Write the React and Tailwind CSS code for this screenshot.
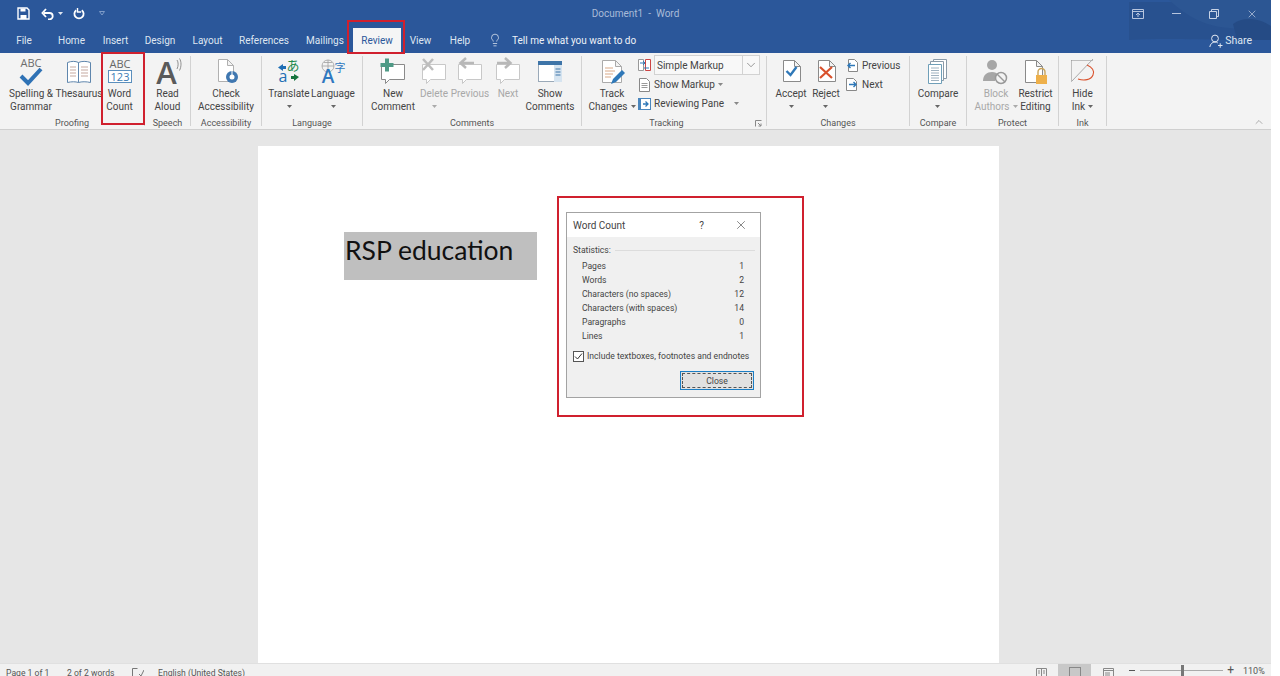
import { Lightbulb, X, ChevronDown, ChevronUp } from 'lucide-react';

const tabs = [
  ['File', 'w-[48px]'],
  ['Home', 'w-[47px]'],
  ['Insert', 'w-[41px]'],
  ['Design', 'w-[48px]'],
  ['Layout', 'w-[47px]'],
  ['References', 'w-[66px]'],
  ['Mailings', 'w-[56px]'],
];

const stats = [
  ['Pages', 1],
  ['Words', 2],
  ['Characters (no spaces)', 12],
  ['Characters (with spaces)', 14],
  ['Paragraphs', 0],
  ['Lines', 1],
];

function Ico({ children, w = 32, h = 32 }) {
  return (
    <svg width={w} height={h} viewBox={`0 0 ${w} ${h}`} fill="none" className="block shrink-0 overflow-visible">
      {children}
    </svg>
  );
}

function Caret({ color = '#666' }) {
  return (
    <svg width="5" height="3" viewBox="0 0 5 3" className="shrink-0">
      <path d="M0 0h5L2.5 3z" fill={color} />
    </svg>
  );
}

function Doc({ x = 8, y = 4, w = 17, h = 22, stroke = '#9a9a9a' }) {
  return (
    <path
      d={`M${x + 0.5} ${y + 0.5}h${w - 6}l6 6v${h - 6}h-${w}z M${x + w - 6 + 0.5} ${y + 0.5}v6h6`}
      fill="#fff"
      stroke={stroke}
    />
  );
}

function Bubble({ stroke = '#8f8f8f', x = 4 }) {
  return (
    <path
      d={`M${x + 0.5} 8.5h23v15h-15l-4 4v-4h-4z`}
      fill="#fff"
      stroke={stroke}
    />
  );
}

function LargeButton({ icon, lines, width, caret, inlineCaret, disabled, children }) {
  return (
    <div className={`relative flex flex-col items-center shrink-0 ${width}`}>
      <div className="h-[31px] flex justify-center w-full">{icon}</div>
      <div className={`flex flex-col items-center leading-[13px] whitespace-nowrap ${disabled ? 'text-[#a8a8a8]' : 'text-[#444]'}`}>
        {lines.map((l, i) => (
          <div key={l} className="h-[13px] flex items-center gap-[3px]">
            {l}
            {inlineCaret && i === lines.length - 1 && <Caret color={disabled ? '#aaa' : '#666'} />}
          </div>
        ))}
        {caret && (
          <div className="h-[13px] flex items-center">
            <Caret color={disabled ? '#aaa' : '#666'} />
          </div>
        )}
      </div>
      {children}
    </div>
  );
}

function Group({ width, label, pad = '', launcher, children }) {
  return (
    <div className={`flex flex-col h-[70px] mt-[3px] border-r border-[#d2d2d2] shrink-0 ${width}`}>
      <div className={`flex h-[60px] ${pad}`}>{children}</div>
      <div className="flex h-[10px] pt-px leading-[12px] text-[9px] text-[#555]">
        <div className="flex-1 text-center whitespace-nowrap">{label}</div>
        {launcher && (
          <div className="w-[15px] pt-[3px] pl-[4px]">
            <svg width="7" height="7" viewBox="0 0 7 7" fill="none">
              <path d="M.5 6.500V.5h6M3 3l3 3M6 3.500V6H3.500" stroke="#888" />
            </svg>
          </div>
        )}
      </div>
    </div>
  );
}

function SmallRow({ icon, text, caret, gap = 'gap-[3px]', className = '' }) {
  return (
    <div className={`flex items-center ${gap} h-[19px] text-[10px] text-[#444] whitespace-nowrap ${className}`}>
      {icon}
      {text}
      {caret}
    </div>
  );
}

function Header() {
  return (
    <div className="relative bg-[#2b579a] h-[53px] shrink-0 overflow-hidden text-[10px] text-[#dfe6f1]">
      <svg width="142" height="53" viewBox="0 0 142 53" className="absolute right-0 top-0">
        <path d="M0 2h142v38H100C70 40 40 38 0 40z" fill="#28518f" />
        <path d="M40 0c20 18 36 26 60 28 18 1 30 8 42 4V0z" fill="#2c5693" />
        <path d="M104 24c10-8 26-6 38 2v14h-34z" fill="#254b85" />
      </svg>
      <div className="relative flex items-center h-[27px]">
        <div className="flex-1 flex items-center">
          <svg width="13" height="13" viewBox="0 0 13 13" fill="none" className="ml-[17px]">
            <path d="M1 1h9l2 2v9H1z" stroke="#fff" strokeWidth="1.400" />
            <path d="M3.500 1.500h5v3h-5zM3.500 8h6v4h-6z" fill="#fff" />
          </svg>
          <svg width="13" height="12" viewBox="0 0 13 12" fill="none" className="ml-[11px]">
            <path d="M3 5h5.500a3.200 3.200 0 0 1 0 6.400H7" stroke="#fff" strokeWidth="1.800" />
            <path d="M5 1 1.400 5 5 9" stroke="#fff" strokeWidth="1.800" />
          </svg>
          <div className="ml-[4px]">
            <Caret color="#dfe6f1" />
          </div>
          <svg width="12" height="12" viewBox="0 0 12 12" fill="none" className="ml-[10px]">
            <path d="M3.200 2.200a4.600 4.600 0 1 0 5.600 0" stroke="#fff" strokeWidth="1.800" />
            <path d="M7.500.3v4h3.600" stroke="#fff" strokeWidth="1.400" transform="translate(-3 -.3)" />
          </svg>
          <svg width="6" height="5" viewBox="0 0 6 5" fill="none" className="ml-[14px]">
            <path d="M.5.5h5L3 4z" stroke="#7f9cc8" />
          </svg>
        </div>
        <div className="text-[#a9bbd8] whitespace-nowrap text-[10px]">Document1&nbsp; -&nbsp; Word</div>
        <div className="flex-1 flex items-center justify-end text-[#c0cde2]">
          <svg width="12" height="10" viewBox="0 0 12 10" fill="none">
            <path d="M.5.5h11v9H.5zM.5 2.500h11M6 8V4M4 6l2-2 2 2" stroke="#b7c5de" />
          </svg>
          <div className="w-[9px] h-px bg-[#b7c5de] ml-[28px]" />
          <svg width="10" height="10" viewBox="0 0 10 10" fill="none" className="ml-[28px]">
            <path d="M.5 2.500h7v7h-7zM2.500 2.500v-2h7v7h-2" stroke="#c7d2e5" />
          </svg>
          <X size={12} strokeWidth={1.2} color="#dbe3f0" className="ml-[27px] mr-[13px]" />
        </div>
      </div>
      <div className="relative flex items-center h-[26px]">
        {tabs.map(([t, w]) => (
          <div key={t} className={`${w} text-center pt-px`}>{t}</div>
        ))}
        <div className="relative w-[48px] h-[25px] mt-px bg-[#f5f5f5] text-[#2b579a] flex items-center justify-center">
          Review
        </div>
        <div className="w-[39px] text-center pt-px">View</div>
        <div className="w-[40px] text-center pt-px">Help</div>
        <Lightbulb size={14} strokeWidth={1.1} color="#fff" className="ml-[8px]" />
        <div className="ml-[10px] pt-px whitespace-nowrap text-[#eef2f8]">Tell me what you want to do</div>
        <div className="ml-auto flex items-center pr-[19px] gap-[2px] pt-[2px]">
          <svg width="14" height="14" viewBox="0 0 14 14" fill="none">
            <circle cx="6" cy="4.500" r="3.400" stroke="#e3e9f3" />
            <path d="M.8 13c.5-3 2.500-5 5.200-5 1.200 0 2 .3 2.800 1M9 11.500h4.500M11.200 9.300v4.500" stroke="#e3e9f3" />
          </svg>
          <span className="text-[10.5px]">Share</span>
        </div>
      </div>
    </div>
  );
}

function Ribbon() {
  return (
    <div className="flex h-[77px] shrink-0 bg-[#f3f3f3] border-b border-[#cfcfcf] text-[10px]">
      <Group width="w-[145px]" label="Proofing" pad="pl-[4px]">
        <LargeButton
          width="w-[54px]"
          lines={['Spelling &', 'Grammar']}
          icon={
            <Ico>
              <text x="16" y="11" textAnchor="middle" fontSize="11" fill="#6d6d6d" fontFamily="Open Sans">ABC</text>
              <path d="M6 20l7 7L26 13" stroke="#2f72b5" strokeWidth="4" />
            </Ico>
          }
        />
        <LargeButton
          width="w-[42px]"
          lines={['Thesaurus']}
          icon={
            <Ico>
              <path d="M4.500 6.500c4-1.500 8-1.500 11 0 3-1.500 8-1.500 12 0v20c-4-1-9-1-12 0-3-1-7-1-11 0z" fill="#fff" stroke="#5f86ad" />
              <path d="M15.500 6.500v20" stroke="#5f86ad" />
              <path d="M7 11h6M7 14h6M7 17h6M7 20h6M18 11h7M18 14h7M18 17h7M18 20h7" stroke="#c5a9a0" />
            </Ico>
          }
        />
        <LargeButton
          width="w-[39px]"
          lines={['Word', 'Count']}
          icon={
            <Ico>
              <text x="16" y="12" textAnchor="middle" fontSize="11" fill="#666" fontFamily="Open Sans">ABC</text>
              <rect x="4.500" y="14.500" width="23" height="12" fill="#fff" stroke="#5b8fbd" />
              <text x="16" y="24.500" textAnchor="middle" fontSize="11" fill="#3c7cb4" fontFamily="Open Sans">123</text>
            </Ico>
          }
        >
          <div className="absolute left-[1px] top-[-4px] w-[44px] h-[73px] border-2 border-[#d0202e] pointer-events-none" />
        </LargeButton>
      </Group>

      <Group width="w-[46px]" label="Speech">
        <LargeButton
          width="w-[45px]"
          lines={['Read', 'Aloud']}
          icon={
            <Ico>
              <text x="14.500" y="27.500" textAnchor="middle" fontSize="31" fontWeight="600" fill="#5a5a5a" fontFamily="Open Sans">A</text>
              <path d="M25 4c1.500 2 1.500 6 0 9M27.500 2.500c2 3 2 8 0 12" stroke="#777" strokeWidth=".8" />
            </Ico>
          }
        />
      </Group>

      <Group width="w-[71px]" label="Accessibility">
        <LargeButton
          width="w-[70px]"
          lines={['Check', 'Accessibility']}
          icon={
            <Ico>
              <Doc x={8} y={3} w={15} h={22} stroke="#b0b0b0" />
              <circle cx="22" cy="21" r="6" fill="#3f77b0" />
              <circle cx="22" cy="21" r="2.500" fill="#fff" />
              <path d="M22 21V15" stroke="#fff" />
            </Ico>
          }
        />
      </Group>

      <Group width="w-[101px]" label="Language" pad="pl-[5px]">
        <LargeButton
          width="w-[44px]"
          lines={['Translate']}
          caret
          icon={
            <Ico>
              <path d="M5 11.500l5-3.500v2h3v3h-3v2z" fill="#1f6fb5" />
              <text x="20" y="14" textAnchor="middle" fontSize="13" fill="#1f8a4d" fontFamily="Noto Sans CJK JP">あ</text>
              <text x="10" y="26" textAnchor="middle" fontSize="16" fill="#1f6fb5" fontFamily="Open Sans">a</text>
              <path d="M26 21l-5 4v-2h-3v-3h3v-2z" fill="#15743e" />
            </Ico>
          }
        />
        <LargeButton
          width="w-[44px]"
          lines={['Language']}
          caret
          icon={
            <Ico>
              <circle cx="11" cy="10" r="6" stroke="#a0a0a0" strokeWidth=".8" />
              <path d="M5 10h12M11 4v12M7 6.500h8" stroke="#a0a0a0" strokeWidth=".8" />
              <text x="11" y="27" textAnchor="middle" fontSize="19" fontWeight="600" fill="#2f78c0" fontFamily="Open Sans">A</text>
              <text x="23" y="16" textAnchor="middle" fontSize="11" fill="#2f78c0" fontFamily="Noto Sans CJK SC">字</text>
            </Ico>
          }
        />
      </Group>

      <Group width="w-[219px]" label="Comments" pad="pl-[7px]">
        <LargeButton
          width="w-[46px]"
          lines={['New', 'Comment']}
          icon={
            <Ico>
              <Bubble stroke="#8a8a8a" />
              <path d="M10 2.500v13M3.500 9h13" stroke="#4f9a86" strokeWidth="4" />
            </Ico>
          }
        />
        <LargeButton
          width="w-[36px]"
          disabled
          lines={['Delete']}
          caret
          icon={
            <Ico>
              <Bubble stroke="#c8c8c8" />
              <path d="M5 3l10 11M15 3L5 14" stroke="#bdbdbd" strokeWidth="2.500" />
            </Ico>
          }
        />
        <LargeButton
          width="w-[36px]"
          disabled
          lines={['Previous']}
          icon={
            <Ico>
              <Bubble stroke="#c8c8c8" />
              <path d="M20 7H7M12 2L6.500 7l5.500 5" stroke="#b8b8b8" strokeWidth="2.500" />
            </Ico>
          }
        />
        <LargeButton
          width="w-[40px]"
          disabled
          lines={['Next']}
          icon={
            <Ico>
              <Bubble stroke="#c8c8c8" />
              <path d="M5 7h13M13 2l5.500 5-5.500 5" stroke="#b8b8b8" strokeWidth="2.500" />
            </Ico>
          }
        />
        <LargeButton
          width="w-[44px]"
          lines={['Show', 'Comments']}
          icon={
            <Ico>
              <rect x="4.500" y="5.500" width="23" height="20" fill="#fff" stroke="#9aa9b8" />
              <rect x="4" y="5" width="24" height="4" fill="#3d74a8" />
              <rect x="20" y="9" width="8" height="17" fill="#d6e4f0" />
              <path d="M21.500 13h5M21.500 16h5M21.500 19h5" stroke="#3d74a8" />
            </Ico>
          }
        />
      </Group>

      <Group width="w-[185px]" label="Tracking" pad="pl-[8px]" launcher>
        <LargeButton
          width="w-[44px]"
          lines={['Track', 'Changes']}
          inlineCaret
          icon={
            <Ico>
              <Doc x={6} y={4} w={19} h={22} stroke="#aaa" />
              <path d="M9 12h8M9 15h10M9 18h8M9 21h6" stroke="#d8a887" />
              <path d="M15 28l2-5L26 14l3 3-9 9z" fill="#2f78b8" />
            </Ico>
          }
        />
        <div className="flex flex-col ml-[4px] -mt-px">
          <div className="flex items-center h-[20px]">
            <svg width="13" height="14" viewBox="0 0 13 14" fill="none" className="shrink-0">
              <path d="M.5 1.500h5v11h-5z" fill="#fff" stroke="#999" />
              <path d="M7.500 1.500h5v11h-5z" fill="#fff" stroke="#c44" />
              <path d="M2 5h5M5 3l2 2-2 2M6 10h5" stroke="#2f78b8" />
            </svg>
            <div className="ml-[3px] flex w-[106px] h-[20px] border border-[#d2d2d2] bg-[#f8f8f8] text-[10px] text-[#444]">
              <div className="flex-1 pl-[2px] leading-[20px]">Simple Markup</div>
              <div className="w-[17px] border-l border-[#d2d2d2] flex items-center justify-center">
                <ChevronDown size={14} strokeWidth={1} color="#555" />
              </div>
            </div>
          </div>
          <SmallRow
            text="Show Markup"
            caret={<Caret color="#888" />}
            icon={
              <svg width="13" height="14" viewBox="0 0 13 14" fill="none" className="shrink-0">
                <path d="M1.500.5h7l3 3v10h-10z" fill="#fff" stroke="#888" />
                <path d="M3.500 5.500h6M3.500 7.500h6M3.500 9.500h6" stroke="#999" />
              </svg>
            }
          />
          <SmallRow
            text="Reviewing Pane"
            caret={
              <div className="ml-[7px]">
                <Caret color="#888" />
              </div>
            }
            icon={
              <svg width="13" height="12" viewBox="0 0 13 12" fill="none" className="shrink-0">
                <rect x=".5" y=".5" width="12" height="11" fill="#fff" stroke="#4a86bd" />
                <rect x="0" y="0" width="3" height="12" fill="#4a86bd" />
                <path d="M5 6h5M7.500 3.500L10 6 7.500 8.500" stroke="#2f78b8" strokeWidth="1.300" />
              </svg>
            }
          />
        </div>
      </Group>

      <Group width="w-[143px]" label="Changes" pad="pl-[7px]">
        <LargeButton
          width="w-[34px]"
          lines={['Accept']}
          caret
          icon={
            <Ico>
              <Doc x={8} y={4} w={17} h={21} stroke="#8a8a8a" />
              <path d="M11.500 15l4 4 6-8" stroke="#2f78b8" strokeWidth="2.400" />
            </Ico>
          }
        />
        <LargeButton
          width="w-[36px]"
          lines={['Reject']}
          caret
          icon={
            <Ico>
              <Doc x={8} y={4} w={17} h={21} stroke="#8a8a8a" />
              <path d="M10 11l12 11M22 11L10 22" stroke="#d9512c" strokeWidth="2.200" />
            </Ico>
          }
        />
        <div className="flex flex-col ml-[2px]">
          <SmallRow
            gap="gap-[4px]"
            text="Previous"
            icon={
              <svg width="12" height="13" viewBox="0 0 12 13" fill="none" className="shrink-0">
                <path d="M2.500.5h6l3 3v9h-9z" fill="#fff" stroke="#888" />
                <path d="M9 6.500H2M4.500 4L2 6.500 4.500 9" stroke="#2f78b8" strokeWidth="1.400" />
              </svg>
            }
          />
          <SmallRow
            gap="gap-[4px]"
            text="Next"
            icon={
              <svg width="12" height="13" viewBox="0 0 12 13" fill="none" className="shrink-0">
                <path d="M.5.5h7l3 3v9h-10z" fill="#fff" stroke="#888" />
                <path d="M3 6.500h7M7.500 4L10 6.500 7.500 9" stroke="#2f78b8" strokeWidth="1.400" />
              </svg>
            }
          />
        </div>
      </Group>

      <Group width="w-[57px]" label="Compare">
        <LargeButton
          width="w-[56px]"
          lines={['Compare']}
          caret
          icon={
            <Ico>
              <path d="M11.500 3.500h13v19h-13z" fill="#fff" stroke="#8a9aa8" />
              <path d="M8.500 5.500h13v19h-13z" fill="#fff" stroke="#8a9aa8" />
              <path d="M6.500 8.500h13v19h-13z" fill="#fff" stroke="#6f9fb8" />
              <path d="M9 12h8M9 14.500h8M9 17h8M9 19.500h8M9 22h8M9 24.500h8" stroke="#9fb2c0" />
            </Ico>
          }
        />
      </Group>

      <Group width="w-[92px]" label="Protect" pad="pl-[9px]">
        <LargeButton
          width="w-[40px]"
          disabled
          lines={['Block', 'Authors']}
          inlineCaret
          icon={
            <Ico>
              <circle cx="12" cy="9" r="5" fill="#a6a6a6" />
              <path d="M3 25c0-6 4-9 9-9 3 0 5 1 6 3l-3 6z" fill="#a6a6a6" />
              <circle cx="21" cy="22" r="5.500" fill="#f3f3f3" stroke="#999" strokeWidth="1.500" />
              <path d="M17 18l8 8" stroke="#999" strokeWidth="1.500" />
            </Ico>
          }
        />
        <LargeButton
          width="w-[39px]"
          lines={['Restrict', 'Editing']}
          icon={
            <Ico>
              <Doc x={5} y={4} w={17} h={22} stroke="#8a8a8a" />
              <path d="M18 19v-3a3.500 3.500 0 0 1 7 0v3" stroke="#c9a45a" strokeWidth="1.400" />
              <rect x="16" y="19" width="11" height="9" fill="#eeb04a" />
            </Ico>
          }
        />
      </Group>

      <Group width="w-[48px]" label="Ink">
        <LargeButton
          width="w-[47px]"
          lines={['Hide', 'Ink']}
          inlineCaret
          icon={
            <Ico>
              <path d="M4.500 4.500h22" stroke="#888" strokeDasharray="1 1" />
              <path d="M4.500 4.500v21" stroke="#888" strokeDasharray="1 1" />
              <path d="M26 3L5 25" stroke="#aaa" />
              <path d="M20 9c5 2 8 6 6 10-2 5-9 6-15 4" stroke="#d9512c" strokeWidth="1.100" />
            </Ico>
          }
        />
      </Group>

      <div className="ml-auto self-end pr-[6px] pb-[1px]">
        <ChevronUp size={12} strokeWidth={1} color="#666" />
      </div>
    </div>
  );
}

function WordCountDialog() {
  return (
    <div className="w-[195px] h-[186px] border border-[#a3a3a3] bg-[#f0f0f0] text-[8.6px] text-[#444] flex flex-col">
      <div className="flex items-center h-[24px] bg-white pl-[6px] text-[10px] shrink-0">
        <span>Word Count</span>
        <span className="ml-auto">?</span>
        <X size={14} strokeWidth={1} color="#333" className="ml-[30px] mr-[12px]" />
      </div>
      <div className="flex items-center gap-[4px] h-[12px] mt-[7px] pl-[6px] pr-[5px]">
        <span>Statistics:</span>
        <div className="flex-1 h-px bg-[#dcdcdc]" />
      </div>
      <div className="flex flex-col mt-[3px] pl-[15px] pr-[16px]">
        {stats.map(([label, n]) => (
          <div key={label} className="flex justify-between h-[14px] leading-[14px]">
            <span>{label}</span>
            <span>{n}</span>
          </div>
        ))}
      </div>
      <div className="flex items-center gap-[3px] mt-[7px] pl-[6px] h-[12px] whitespace-nowrap">
        <div className="w-[11px] h-[11px] border border-[#555] bg-white flex items-center justify-center">
          <svg width="9" height="9" viewBox="0 0 9 9" fill="none">
            <path d="M1 4.500l2.500 2.500L8 1.500" stroke="#333" />
          </svg>
        </div>
        <span>Include textboxes, footnotes and endnotes</span>
      </div>
      <div className="flex justify-end mt-[9px] pr-[6px]">
        <div className="w-[74px] h-[19px] border-[1.5px] border-[#1a7dc4] bg-[#e1e1e1] p-px">
          <div className="h-full border border-dashed border-[#555] flex items-center justify-center pt-px">Close</div>
        </div>
      </div>
    </div>
  );
}

function StatusBar() {
  return (
    <div className="h-[13px] shrink-0 overflow-hidden bg-[#f1f1f1] border-t border-[#e0e0e0] flex text-[8.6px] text-[#555]">
      <div className="flex items-center h-[18px] pl-[6px] whitespace-nowrap">
        <span className="w-[44px]">Page 1 of 1</span>
        <span className="w-[48px] ml-[17px]">2 of 2 words</span>
        <svg width="12" height="11" viewBox="0 0 12 11" fill="none" className="ml-[17px]">
          <path d="M5.500.5h-5v10h6M7 6l2 2 3-6" stroke="#777" />
        </svg>
        <span className="ml-[14px]">English (United States)</span>
      </div>
      <div className="ml-auto flex items-start h-[18px] whitespace-nowrap">
        <svg width="11" height="11" viewBox="0 0 11 11" fill="none" className="mt-[3px]">
          <path d="M.5 1.500h10v9H.5zM5.500 1.500v9M2 4h2M2 6h2M7 4h2M7 6h2" stroke="#888" />
        </svg>
        <div className="ml-[11px] w-[33px] h-[18px] bg-[#c8c8c8] flex justify-center pt-[3px]">
          <div className="w-[12px] h-[12px] border border-[#888]" />
        </div>
        <svg width="11" height="11" viewBox="0 0 11 11" fill="none" className="ml-[12px] mt-[3px]">
          <path d="M.5 1.500h10v9H.5zM.5 3.500h10M2 6h5M2 8h5" stroke="#888" />
        </svg>
        <div className="ml-[15px] mt-[6px] w-[6px] h-px bg-[#555]" />
        <div className="relative ml-[5px] mt-[6px] w-[83px] h-px bg-[#aaa]">
          <div className="absolute left-[41px] top-[-5px] w-[3px] h-[11px] bg-[#777]" />
        </div>
        <div className="ml-[4px] mt-[2px] leading-[9px] text-[12px] text-[#555]">+</div>
        <div className="ml-[9px] mt-[1px] w-[28px] leading-[12px] text-[9px]">110%</div>
      </div>
    </div>
  );
}

export default function App() {
  return (
    <div className="h-[676px] w-[1280px] overflow-hidden bg-white font-['Roboto',sans-serif]">
      <div className="relative w-[1271px] h-full flex flex-col">
        <Header />
        <Ribbon />
        <div className="flex-1 min-h-0 bg-[#e6e6e6] pt-[16px] pl-[258px]">
          <div className="relative w-[741px] h-full bg-white pt-[86px] pl-[86px]">
            <div className="w-[193px] h-[48px] bg-[#bfbfbf] pl-px font-['Lato',sans-serif] text-[26.500px] leading-[36px] text-[#111] whitespace-nowrap">
              RSP education
            </div>
            <div className="absolute left-[299px] top-[50px] w-[247px] h-[221px] border-2 border-[#d0202e] pl-[7px] pt-[14px]">
              <WordCountDialog />
            </div>
          </div>
        </div>
        <StatusBar />
        <div className="absolute left-[347px] top-[20px] w-[58px] h-[34px] border-2 border-[#d0202e] pointer-events-none" />
      </div>
    </div>
  );
}
